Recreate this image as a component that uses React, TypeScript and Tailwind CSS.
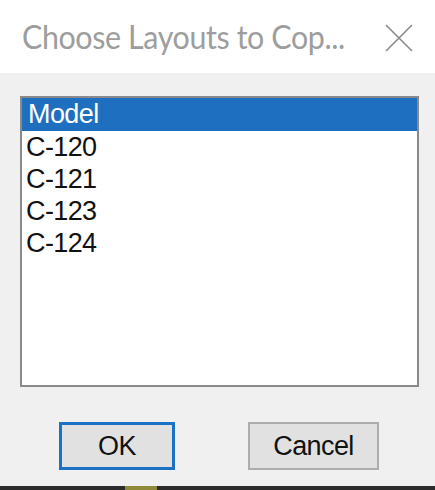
export default function App() {
  const items = ["Model", "C-120", "C-121", "C-123", "C-124"];

  return (
    <div className="w-[435px] h-[490px] flex flex-col bg-[#f0f0f0] overflow-hidden">
      {/* Title bar */}
      <div className="h-[73px] bg-white flex items-center justify-between pl-[22px] pr-[22px] shrink-0">
        <span
          className="text-[32px] text-[#9d9d9d] leading-none tracking-[-0.4px] scale-x-[0.95] origin-left"
          style={{ fontFamily: 'Lato, "Open Sans", sans-serif' }}
        >
          Choose Layouts to Cop...
        </span>
        <svg width="28" height="28" viewBox="0 0 28 28" className="mt-[3px]">
          <path d="M1 1 L27 27 M27 1 L1 27" stroke="#8a8a8a" strokeWidth="1.6" fill="none" />
        </svg>
      </div>

      {/* Body */}
      <div className="flex-1 flex flex-col px-[20px] pt-[23px]">
        <div className="w-[399px] h-[291px] bg-white border-2 border-[#8a8a8a]">
          <ul style={{ fontFamily: '"Liberation Sans", Arial, sans-serif' }} className="text-[27px] tracking-[-0.6px] leading-[32px]">
            {items.map((it, i) => (
              <li
                key={it}
                className={
                  i === 0
                    ? "bg-[#1e6fbf] text-white pl-[6px] h-[33px] leading-[33px]"
                    : "text-[#111] pl-[4px] h-[32px]"
                }
              >
                {it}
              </li>
            ))}
          </ul>
        </div>

        <div
          className="flex gap-[73px] pl-[39px] mt-[35px] text-[27px] text-[#111] tracking-[-0.6px]"
          style={{ fontFamily: '"Liberation Sans", Arial, sans-serif' }}
        >
          <button className="w-[116px] h-[48px] bg-[#e1e1e1] border-[3px] border-[#1b72c4] flex items-center justify-center">
            OK
          </button>
          <button className="w-[131px] h-[48px] bg-[#e1e1e1] border-2 border-[#adadad] flex items-center justify-center">
            Cancel
          </button>
        </div>
      </div>

      {/* bottom edge of window behind */}
      <div className="h-[4px] bg-[#2b2b2b] flex shrink-0">
        <div className="w-[125px]" />
        <div className="w-[32px] bg-[#8f8a3a]" />
      </div>
    </div>
  );
}
